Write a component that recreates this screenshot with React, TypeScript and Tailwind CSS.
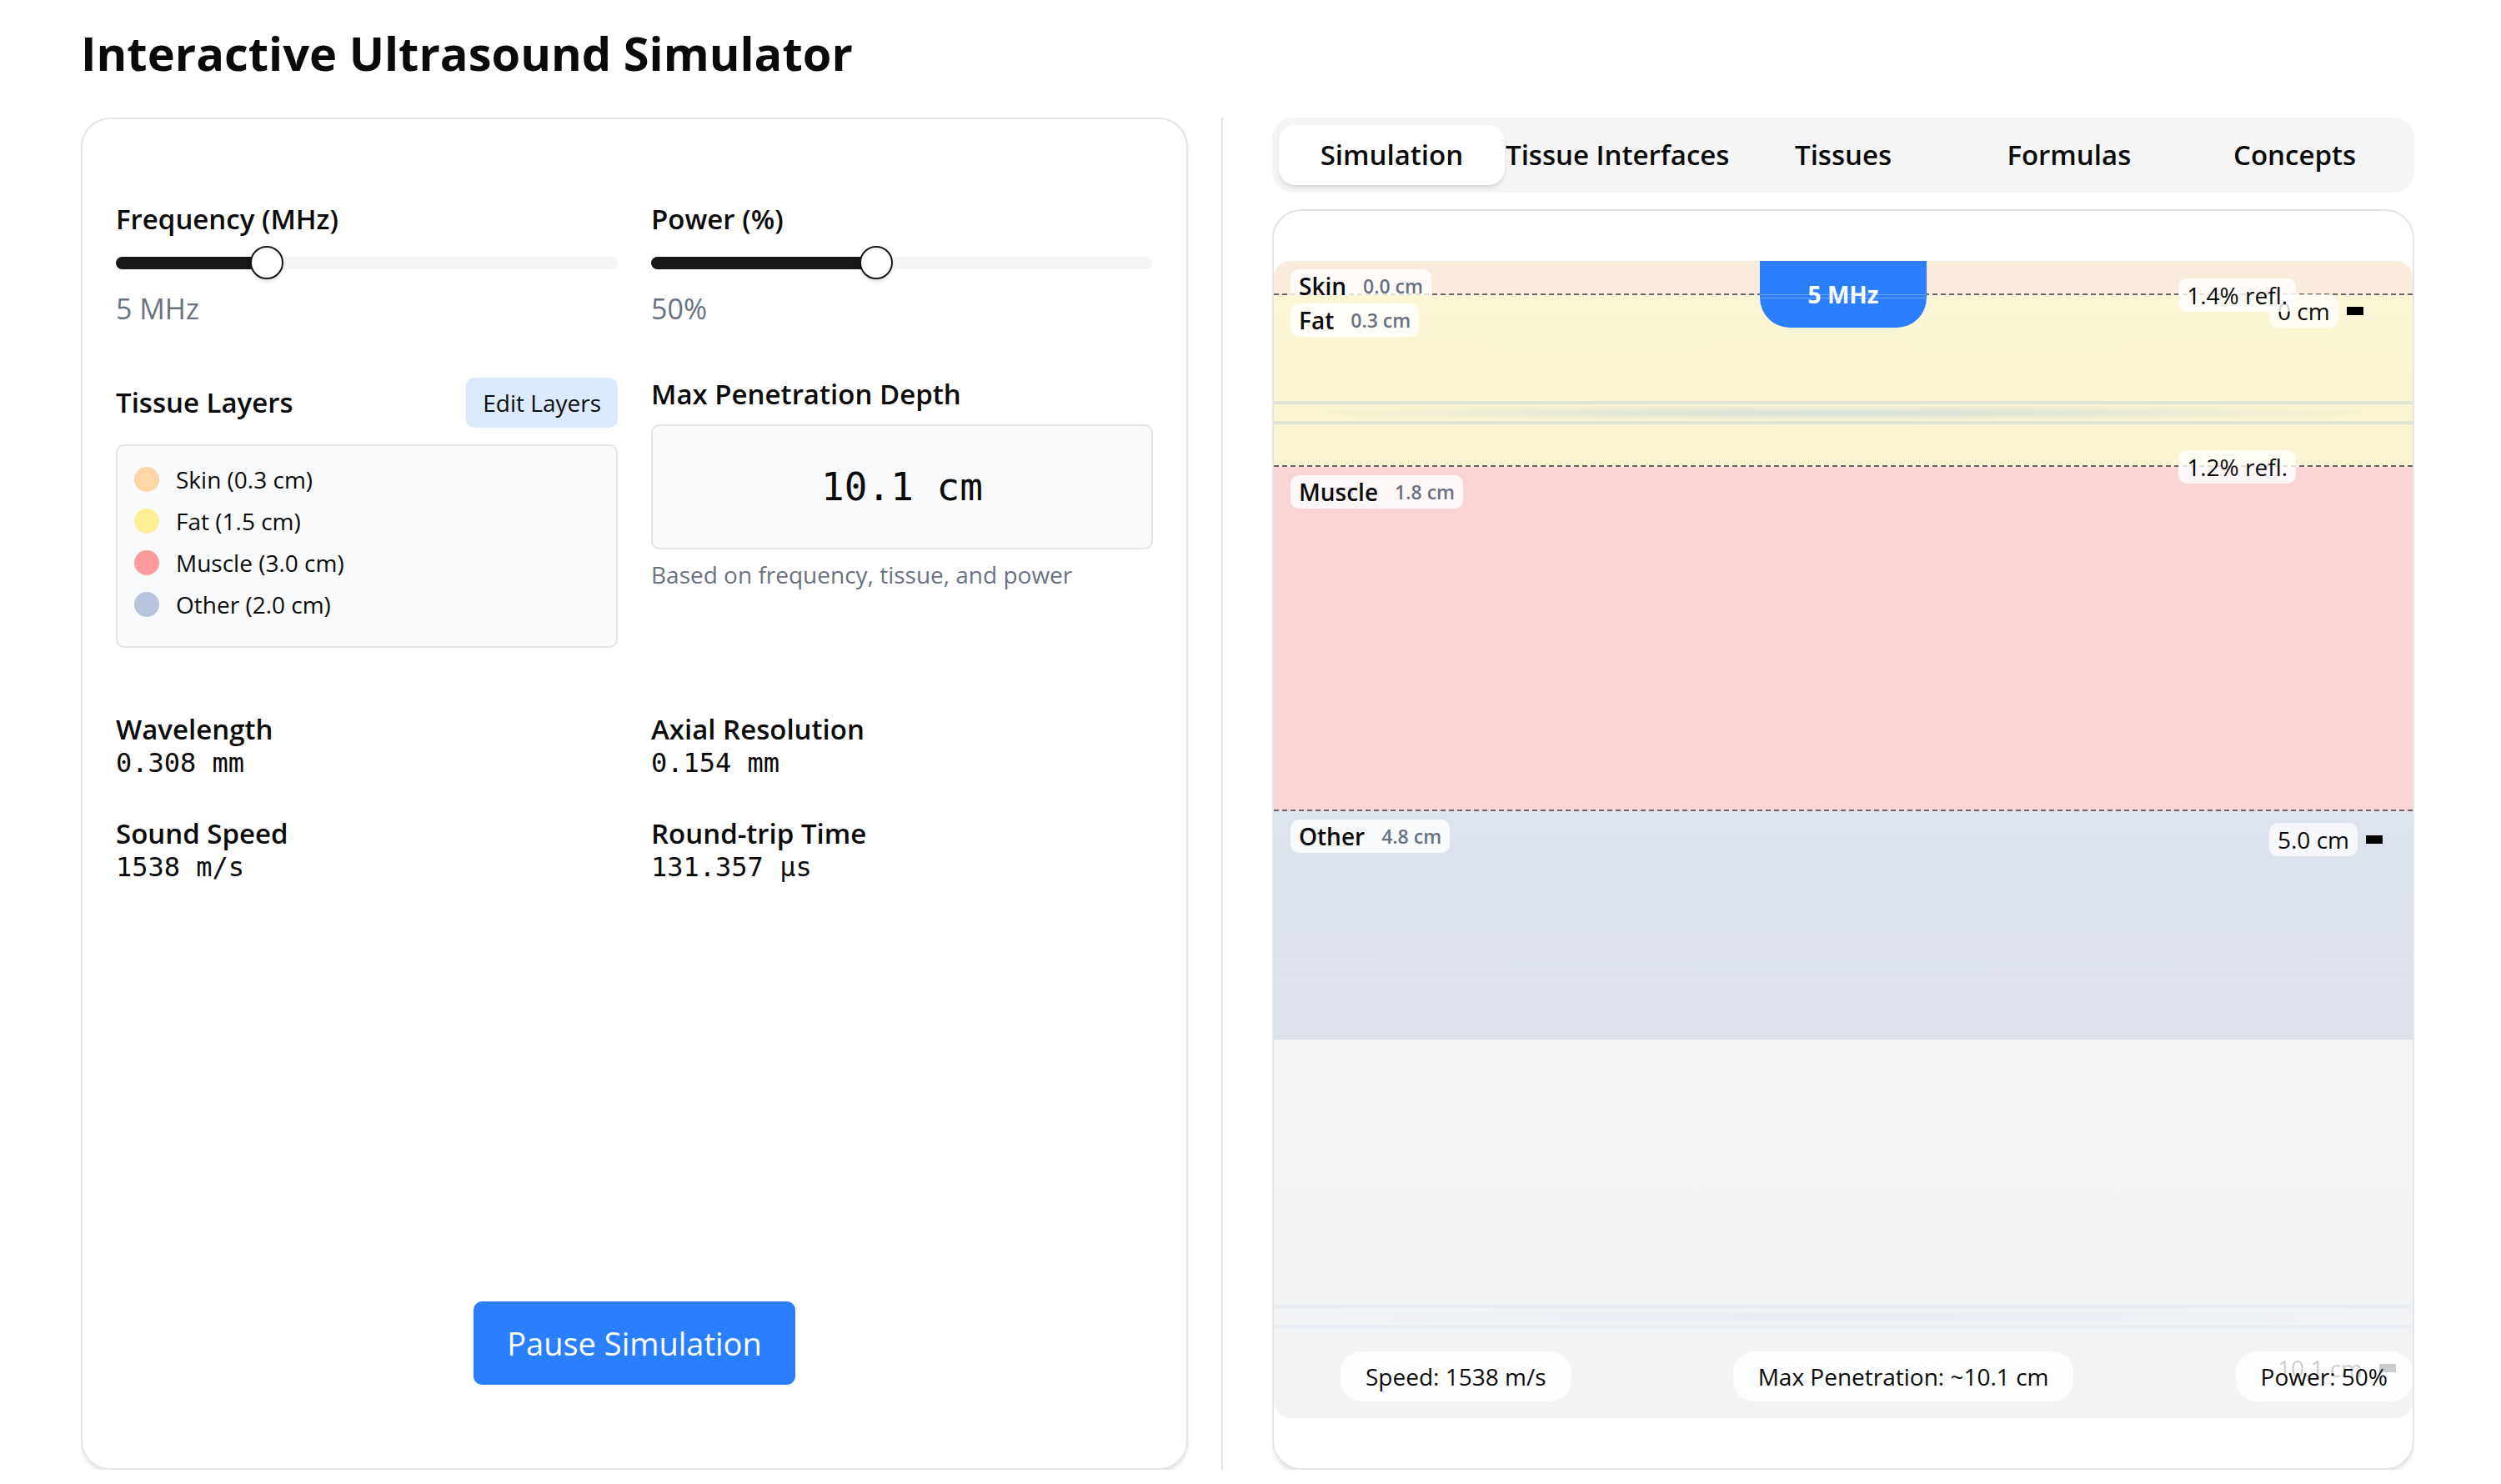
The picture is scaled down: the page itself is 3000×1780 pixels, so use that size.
import React, { useState } from "react";

const MAX_DEPTH = 10.1;

const layers = [
  { name: "Skin", start: 0, size: 0.3, dot: "bg-[#ffd6a5]", band: "bg-[#faecdc]", reflection: "1.4% refl." },
  { name: "Fat", start: 0.3, size: 1.5, dot: "bg-[#fff095]", band: "bg-linear-to-b from-[#fbf6d6] to-[#fbf4d2]", reflection: "1.2% refl." },
  { name: "Muscle", start: 1.8, size: 3.0, dot: "bg-[#ff9b9b]", band: "bg-linear-to-b from-[#fad5d6] to-[#f9d5d5]", reflection: "" },
  { name: "Other", start: 4.8, size: 2.0, dot: "bg-[#b8c4db]", band: "bg-linear-to-b from-[#dde4ed] to-[#dee2ed]", reflection: "" },
];

const waves = [
  { top: 12.1, opacity: 1 },
  { top: 59.8, opacity: 0.08 },
  { top: 90.2, opacity: 0.32 },
];

const percent = (cm: number) => `${(cm / MAX_DEPTH) * 100}%`;

const sliderClass =
  "block h-10 w-full cursor-pointer appearance-none bg-transparent outline-none " +
  "[&::-webkit-slider-runnable-track]:h-[15px] [&::-webkit-slider-runnable-track]:rounded-full " +
  "[&::-webkit-slider-runnable-track]:bg-[linear-gradient(to_right,#171717_var(--fill),#f5f5f5_var(--fill))] " +
  "[&::-webkit-slider-thumb]:-mt-[13px] [&::-webkit-slider-thumb]:size-10 [&::-webkit-slider-thumb]:appearance-none " +
  "[&::-webkit-slider-thumb]:rounded-full [&::-webkit-slider-thumb]:border-2 [&::-webkit-slider-thumb]:border-[#171717] " +
  "[&::-webkit-slider-thumb]:bg-white [&::-webkit-slider-thumb]:shadow-md";

type SliderProps = {
  id: string;
  label: string;
  min: number;
  max: number;
  value: number;
  unit: string;
  onChange: (value: number) => void;
};

function SliderField({ id, label, min, max, value, unit, onChange }: SliderProps) {
  const fill = { "--fill": `${((value - min) / (max - min)) * 100}%` } as React.CSSProperties;
  return (
    <div>
      <label htmlFor={id} className="mb-3 block text-[33px] leading-10 font-semibold">
        {label}
      </label>
      <input
        id={id}
        type="range"
        min={min}
        max={max}
        value={value}
        style={fill}
        onChange={(e) => onChange(Number(e.target.value))}
        className={sliderClass}
      />
      <p className="mt-2.5 text-[34px] leading-[50px] text-[#6a7282]">
        {value}
        {unit}
      </p>
    </div>
  );
}

function Stat({ label, value }: { label: string; value: string }) {
  return (
    <div>
      <dt className="text-[33px] leading-10 font-semibold">{label}</dt>
      <dd className="font-['DejaVu_Sans_Mono',monospace] text-[32px] leading-10">{value}</dd>
    </div>
  );
}

function DepthMark({ text }: { text: string }) {
  return (
    <div className="flex items-center gap-2.5">
      <span className="rounded-[10px] bg-white/70 px-2.5 text-[28px] leading-10">{text}</span>
      <span className="h-2.5 w-5 bg-black" />
    </div>
  );
}

function Wave({ top, opacity }: { top: number; opacity: number }) {
  return (
    <div
      className="absolute inset-x-0 flex h-7 flex-col justify-between"
      style={{ top: `${top}%`, opacity }}
    >
      <div className="h-1 bg-[#2b7fff]/12" />
      <div className="h-5 bg-[radial-gradient(ellipse_50%_50%_at_center,rgba(43,127,255,0.18),transparent)]" />
      <div className="h-1 bg-[#2b7fff]/12" />
    </div>
  );
}

function Simulation({ frequency, power }: { frequency: number; power: number }) {
  return (
    <div className="relative flex-1 overflow-hidden rounded-[20px] bg-linear-to-b from-[#f6f7f9] to-[#f2f3f5]">
      {layers.map((layer, i) => (
        <div
          key={layer.name}
          className={`absolute inset-x-0 ${layer.band}`}
          style={{ top: percent(layer.start), height: percent(layer.size) }}
        >
          {i < layers.length - 1 && (
            <div className="absolute inset-x-0 bottom-0 border-b-2 border-dashed border-[#666666]" />
          )}
          <div className="absolute top-2.5 left-5 flex items-center gap-5 rounded-[10px] bg-white/80 px-2.5 leading-10 font-semibold">
            <span className="text-[28px]">{layer.name}</span>
            <span className="text-[23px] text-[#6a7282]">{layer.start.toFixed(1)} cm</span>
          </div>
        </div>
      ))}

      <div className="absolute top-0 left-1/2 flex h-20 w-[200px] -translate-x-1/2 items-center justify-center rounded-b-[36px] bg-[#2b7fff] text-[28px] leading-10 font-bold text-white">
        {frequency} MHz
        <div className="absolute inset-x-0 top-10 h-[5px] border-y border-white/30" />
      </div>

      {waves.map((wave) => (
        <Wave key={wave.top} top={wave.top} opacity={wave.opacity} />
      ))}

      <div className="absolute inset-y-10 right-5 flex flex-col justify-between">
        <DepthMark text="0 cm" />
        <DepthMark text="5.0 cm" />
        <DepthMark text="10.1 cm" />
      </div>

      {layers
        .filter((layer) => layer.reflection)
        .map((layer) => (
          <div
            key={layer.name}
            className="absolute right-[140px] -mt-5 rounded-[10px] bg-white/80 px-2.5 text-[28px] leading-10"
            style={{ top: percent(layer.start + layer.size) }}
          >
            {layer.reflection}
          </div>
        ))}

      <div className="absolute right-0 bottom-5 left-20 flex justify-between text-[28px] leading-10">
        <span className="rounded-[25px] bg-white/80 px-[30px] py-2.5">Speed: 1538 m/s</span>
        <span className="rounded-[25px] bg-white/80 px-[30px] py-2.5">Max Penetration: ~10.1 cm</span>
        <span className="rounded-[25px] bg-white/80 px-[30px] py-2.5">Power: {power}%</span>
      </div>
    </div>
  );
}

const tabs = ["Simulation", "Tissue Interfaces", "Tissues", "Formulas", "Concepts"];

export default function App() {
  const [frequency, setFrequency] = useState(5);
  const [power, setPower] = useState(50);
  const [tab, setTab] = useState("Simulation");
  const [running, setRunning] = useState(true);

  return (
    <div className="flex min-h-screen flex-col bg-white pt-7 pr-[104px] pb-[17px] pl-[97px] font-['Open_Sans',sans-serif] text-[#0a0a0a]">
      <h1 className="mb-[43px] text-[56px] leading-[70px] font-bold">Interactive Ultrasound Simulator</h1>

      <main className="grid flex-1 grid-cols-2 gap-[59px]">
        <div className="flex overflow-hidden border-r-2 border-[#e5e5e5] pr-10">
          <section className="flex flex-1 flex-col rounded-[35px] border-2 border-[#e5e5e5] px-10 py-[100px] shadow-md">
            <div className="grid grid-cols-2 gap-x-10 gap-y-[58px]">
              <SliderField id="frequency" label="Frequency (MHz)" min={1} max={15} value={frequency} unit=" MHz" onChange={setFrequency} />
              <SliderField id="power" label="Power (%)" min={10} max={100} value={power} unit="%" onChange={setPower} />

              <div>
                <div className="mb-5 flex items-center justify-between">
                  <h2 className="text-[33px] leading-10 font-semibold">Tissue Layers</h2>
                  <button type="button" className="rounded-[10px] bg-[#dbeafe] px-5 py-2.5 text-[28px] leading-10">
                    Edit Layers
                  </button>
                </div>
                <ul className="rounded-[10px] border-2 border-[#e5e5e5] bg-[#f9fafb] p-5">
                  {layers.map((layer) => (
                    <li key={layer.name} className="mb-2.5 flex items-center gap-5 text-[28px] leading-10">
                      <span className={`size-[30px] rounded-full ${layer.dot}`} />
                      {layer.name} ({layer.size.toFixed(1)} cm)
                    </li>
                  ))}
                </ul>
              </div>

              <div>
                <h2 className="mb-4 text-[33px] leading-10 font-semibold">Max Penetration Depth</h2>
                <div className="flex h-[150px] items-center justify-center rounded-[10px] border-2 border-[#e5e5e5] bg-[#f9fafb] font-['DejaVu_Sans_Mono',monospace] text-[46px]">
                  10.1 cm
                </div>
                <p className="mt-2.5 text-[28px] leading-10 text-[#6a7282]">Based on frequency, tissue, and power</p>
              </div>
            </div>

            <dl className="mt-[78px] grid grid-cols-2 gap-x-10 gap-y-[45px]">
              <Stat label="Wavelength" value="0.308 mm" />
              <Stat label="Axial Resolution" value="0.154 mm" />
              <Stat label="Sound Speed" value="1538 m/s" />
              <Stat label="Round-trip Time" value="131.357 µs" />
            </dl>

            <button
              type="button"
              onClick={() => setRunning(!running)}
              className="mt-auto self-center rounded-[10px] bg-[#2b7fff] px-10 py-5 text-[38px] leading-[60px] text-white"
            >
              {running ? "Pause Simulation" : "Start Simulation"}
            </button>
          </section>
        </div>

        <div className="flex flex-col gap-5 overflow-hidden">
          <div role="tablist" className="grid h-[90px] grid-cols-5 rounded-[25px] bg-[#f5f5f5] px-2 py-[9px]">
            {tabs.map((name) => (
              <button
                key={name}
                type="button"
                role="tab"
                aria-selected={tab === name}
                onClick={() => setTab(name)}
                className="rounded-[20px] text-[33px] leading-[50px] font-semibold whitespace-nowrap aria-selected:bg-white aria-selected:shadow-md"
              >
                {name}
              </button>
            ))}
          </div>
          <section className="flex flex-1 flex-col rounded-[35px] border-2 border-[#e5e5e5] py-[60px] shadow-md">
            <Simulation frequency={frequency} power={power} />
          </section>
        </div>
      </main>
    </div>
  );
}
